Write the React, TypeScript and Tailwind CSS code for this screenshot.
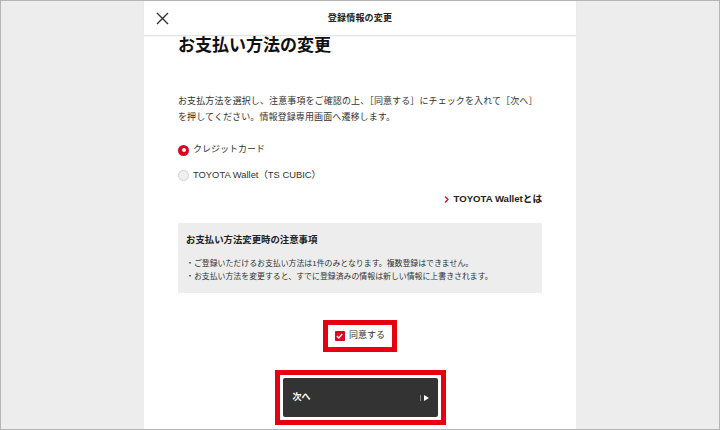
export default function App() {
  return (
    <div className="flex h-[430px] w-[720px] justify-center overflow-hidden border border-[#b5b5b5] bg-[#ededed] font-['Liberation_Sans','Noto_Sans_CJK_JP',sans-serif] text-[#222]">
      <div className="flex w-[432px] flex-col bg-white">
        {/* ヘッダー */}
        <header className="relative flex h-[35px] shrink-0 items-center justify-center border-b border-[#e2e2e2] shadow-[0_1px_2px_rgba(0,0,0,0.04)]">
          <button className="absolute left-[11px] top-[10px] flex h-[14px] w-[14px] items-center justify-center">
            <svg width="13" height="13" viewBox="0 0 13 13" fill="none" stroke="#333" strokeWidth="1.4">
              <path d="M1 1 L12 12 M12 1 L1 12" />
            </svg>
          </button>
          <h1 className="text-[9px] font-bold leading-none tracking-[0.02em] text-[#222]">登録情報の変更</h1>
        </header>

        <main className="flex flex-col px-[34px]">
          <h2 className="text-[17px] font-bold leading-[20px] text-[#111]">お支払い方法の変更</h2>

          <p className="mt-[37px] text-[9px] leading-[16px] tracking-[0.012em] text-[#333]">
            お支払方法を選択し、注意事項をご確認の上、［同意する］にチェックを入れて［次へ］
            <br />
            を押してください。情報登録専用画面へ遷移します。
          </p>

          <div className="mt-[17px] flex flex-col gap-[9px]">
            <label className="flex h-[16px] items-center gap-[4px] text-[9px] text-[#333]">
              <span className="flex h-[11px] w-[11px] items-center justify-center rounded-full bg-[#d7081f]">
                <span className="h-[4px] w-[4px] rounded-full bg-white" />
              </span>
              クレジットカード
            </label>
            <label className="flex h-[16px] items-center gap-[4px] text-[9.4px] text-[#333]">
              <span className="h-[11px] w-[11px] rounded-full border border-[#d0d0d0] bg-[#f0f0f0]" />
              TOYOTA Wallet（TS CUBIC）
            </label>
          </div>

          <a className="mt-[8px] flex h-[16px] items-center justify-end gap-[5px] text-[9.6px] font-bold text-[#222]">
            <svg width="5" height="7" viewBox="0 0 5 7" fill="none" stroke="#d7081f" strokeWidth="1.3">
              <path d="M1 0.5 L4 3.5 L1 6.5" />
            </svg>
            TOYOTA Walletとは
          </a>

          <section className="mt-[16px] flex h-[70px] flex-col bg-[#ededed] px-[8px] pt-[10px]">
            <h3 className="text-[9.4px] font-bold leading-[14px] text-[#222]">お支払い方法変更時の注意事項</h3>
            <ul className="mt-[10px] text-[7.9px] leading-[13px] text-[#333]">
              <li>・ご登録いただけるお支払い方法は1件のみとなります。複数登録はできません。</li>
              <li>・お支払い方法を変更すると、すでに登録済みの情報は新しい情報に上書きされます。</li>
            </ul>
          </section>

          <div className="mt-[27px] flex justify-center">
            <label className="flex h-[32px] w-[74px] items-center justify-center gap-[4px] border-[5px] border-[#e60012] text-[9px] text-[#333]">
              <span className="flex h-[10px] w-[10px] items-center justify-center rounded-[1px] bg-[#d7081f]">
                <svg width="7" height="6" viewBox="0 0 7 6" fill="none" stroke="white" strokeWidth="1.3">
                  <path d="M0.8 3 L2.8 5 L6.2 1" />
                </svg>
              </span>
              同意する
            </label>
          </div>

          <div className="mt-[18px] flex justify-center">
            <div className="border-[5px] border-[#e60012] p-[3px]">
              <button className="flex h-[39px] w-[155px] items-center justify-between rounded-[2px] bg-[#333] pl-[10px] pr-[9px] text-[9px] font-bold text-white">
                次へ
                <span className="flex items-center gap-[3px]">
                  <span className="h-[6px] w-px bg-[#888]" />
                  <svg width="5" height="6" viewBox="0 0 5 6" fill="white">
                    <path d="M0 0 L5 3 L0 6 Z" />
                  </svg>
                </span>
              </button>
            </div>
          </div>
        </main>
      </div>
    </div>
  );
}
